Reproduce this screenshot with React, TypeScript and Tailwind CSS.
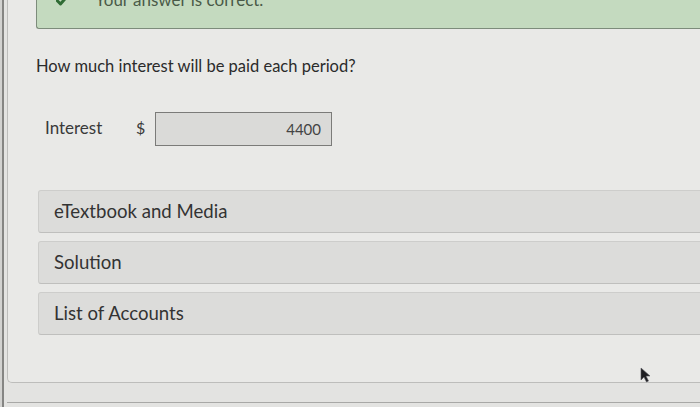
import React from 'react'

const PANELS = ['eTextbook and Media', 'Solution', 'List of Accounts']

export default function App() {
  return (
    <div
      className="w-[700px] h-[407px] overflow-hidden bg-[#e3e3e1] flex relative"
      style={{ fontFamily: 'Lato, "Open Sans", sans-serif' }}
    >
      {/* window edge */}
      <div className="w-[2px] bg-[#d2d2d0]" />
      <div className="w-[2px] bg-[#858583]" />

      <div className="flex-1 flex flex-col ml-[3px] min-w-0">
        {/* question card */}
        <div className="h-[383px] w-[720px] border-l border-b border-[#bdbdbb] rounded-bl-[5px] bg-[#e9e9e7] pl-[28px] flex flex-col">
          {/* answer status */}
          <div className="-mt-[29px] h-[58px] bg-[#c4dabf] border-l border-b border-[#7d8c7b] rounded-bl-[3px] flex items-center pl-[19px] gap-[27px] text-[#4a5a48]">
            <svg width="12" height="12" viewBox="0 0 12 12" className="shrink-0">
              <path d="M1 6.5 L4.5 10 L11 2.5" fill="none" stroke="#2f6b34" strokeWidth="3" strokeLinecap="round" strokeLinejoin="round" />
            </svg>
            <span className="text-[17px]">Your answer is correct.</span>
          </div>

          <p className="mt-[25px] text-[16.5px] leading-[24px] text-[#2b2b2b]">
            How much interest will be paid each period?
          </p>

          {/* answer row */}
          <div className="mt-[34px] flex items-center h-[34px]">
            <span className="w-[100px] pl-[9px] pb-[3px] text-[17px] text-[#3a3a3a]">Interest</span>
            <span className="w-[19px] pb-[3px] text-[16px] text-[#3a3a3a]">$</span>
            <div className="w-[177px] h-[34px] border border-[#7b7b79] bg-[#dadad8] flex items-center justify-end pr-[10px] text-[15px] text-[#444]">
              4400
            </div>
          </div>

          {/* resource panels */}
          <div className="mt-[44px] ml-[2px] flex flex-col gap-[8px]">
            {PANELS.map((label) => (
              <div
                key={label}
                className="h-[43px] border border-[#cdcdcb] border-b-[#bfbfbd] rounded-[3px] bg-[#dcdcda] flex items-center pl-[15px] text-[18.6px] text-[#333]"
              >
                {label}
              </div>
            ))}
          </div>
        </div>

        <div className="h-[20px] w-[720px] border-b border-[#a8a8a6]" />
      </div>

      {/* mouse pointer */}
      <svg className="absolute left-[640px] top-[367px]" width="11" height="16" viewBox="0 0 11 16">
        <path d="M1 1 L1 13 L4 10 L6.5 15 L8.5 14 L6 9 L10 9 Z" fill="#1e1e22" stroke="#55555c" strokeWidth="0.6" />
      </svg>
    </div>
  )
}
